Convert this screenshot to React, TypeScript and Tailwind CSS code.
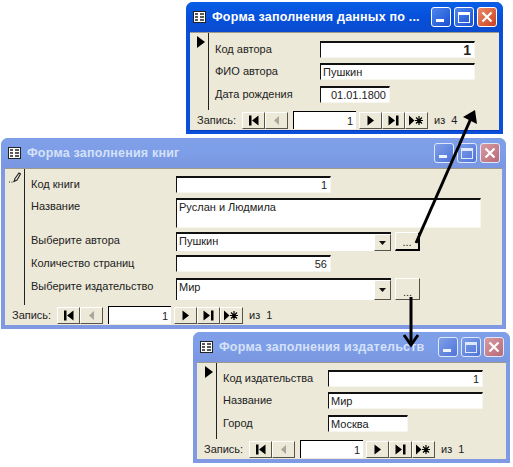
import type { ReactNode } from 'react';

const labelCls = "text-[11px] leading-none text-[#222] whitespace-nowrap";

const FormIcon = () => (
  <svg width="13" height="12" viewBox="0 0 13 12" className="shrink-0">
    <rect x="0.5" y="0.5" width="12" height="11" fill="#fff" stroke="#222" />
    <path d="M2 3h3M2 6h3M2 9h3M7 3h4M7 6h4M7 9h4" stroke="#222" strokeWidth="1.4" />
  </svg>
);

const CaptionButtons = ({ active }: { active: boolean }) => {
  const line = active ? 'border-white' : 'border-[#dfe8fb]';
  const blue = active
    ? 'bg-gradient-to-br from-[#4f86ee] to-[#1a4fd0]'
    : 'bg-gradient-to-br from-[#7f9fe8] to-[#4f74d8]';
  const red = active
    ? 'bg-gradient-to-br from-[#ec8a68] to-[#c8401c]'
    : 'bg-gradient-to-br from-[#d89aa0] to-[#b86a78]';
  const mark = active ? 'bg-white' : 'bg-[#eef3fd]';
  return (
    <div className="flex gap-[3px]">
      <div className={`w-[20px] h-[20px] rounded-[3px] border ${line} ${blue} flex items-end pl-[4px] pb-[4px]`}>
        <div className={`w-[8px] h-[3px] ${mark}`} />
      </div>
      <div className={`w-[20px] h-[20px] rounded-[3px] border ${line} ${blue} flex items-center justify-center`}>
        <div className={`w-[12px] h-[11px] border ${line} border-t-[3px]`} />
      </div>
      <div className={`w-[20px] h-[20px] rounded-[3px] border ${line} ${red} flex items-center justify-center`}>
        <svg width="12" height="12" viewBox="0 0 12 12">
          <path d="M1.500 1.500l9 9M10.500 1.500l-9 9" stroke="#fff" strokeWidth="2.2" />
        </svg>
      </div>
    </div>
  );
};

const NavButton = ({ children }: { children: ReactNode }) => (
  <div className="w-[23px] h-[17px] bg-[#ece9d8] border-t border-l border-t-white border-l-white border-r border-b border-r-[#55534a] border-b-[#55534a] flex items-center justify-center">
    <svg width="15" height="11" viewBox="0 0 15 11">{children}</svg>
  </div>
);

const NavBar = ({ total }: { total: number }) => (
  <div className="h-[20px] flex items-center shrink-0 pl-[7px]">
    <span className={`${labelCls} w-[45px]`}>Запись:</span>
    <NavButton>
      <path d="M3 0.500h2.500v10H3zM12.500 0.500v10L6 5.500z" fill="#000" />
    </NavButton>
    <NavButton>
      <path d="M10 1v9L5 5.500z" fill="#aaa79a" />
    </NavButton>
    <div className="ml-[5px] mr-[3px] w-[63px] h-[18px] bg-white border-t border-l border-black flex items-end justify-end pr-[3px] text-[11px] leading-[15px] text-[#222]">
      1
    </div>
    <NavButton>
      <path d="M4.500 0.500v10l6.500-5z" fill="#000" />
    </NavButton>
    <NavButton>
      <path d="M2.500 0.500v10l6.500-5zM10 0.500h2.500v10H10z" fill="#000" />
    </NavButton>
    <NavButton>
      <path d="M0 0.500v10l5.500-5z" fill="#000" />
      <path d="M10 1v9M6 5.500h8M7 2.500l6 6M13 2.500l-6 6" stroke="#000" strokeWidth="1.200" />
    </NavButton>
    <span className={`${labelCls} ml-[6px]`}>из&nbsp;&nbsp;{total}</span>
  </div>
);

const Field = ({ value, align, className }: { value: string; align?: 'right'; className: string }) => (
  <div
    className={`bg-white border-t-2 border-l border-t-[#111] border-l-[#111] border-r border-b border-r-[#f6f5ee] border-b-[#f6f5ee] pl-[2px] pr-[3px] text-[11px] leading-[14px] text-[#222] whitespace-nowrap ${
      align === 'right' ? 'text-right' : ''
    } ${className}`}
  >
    {value}
  </div>
);

const Combo = ({ value, heavy }: { value: string; heavy?: boolean }) => (
  <>
    <div className="w-[215px] h-full bg-white border-t-2 border-l border-[#111] flex items-stretch justify-between text-[11px] leading-[14px] text-[#222] pl-[2px]">
      <span>{value}</span>
      <div className="w-[17px] bg-[#ece9d8] border-t border-l border-t-white border-l-white border-r border-b border-r-[#55534a] border-b-[#55534a] flex items-center justify-center">
        <svg width="7" height="4" viewBox="0 0 7 4">
          <path d="M0 0h7L3.500 4z" fill="#111" />
        </svg>
      </div>
    </div>
    <div
      className={`ml-[4px] w-[25px] h-full border-t border-l border-t-white border-l-white flex items-end justify-center text-[11px] leading-[14px] text-[#222] ${
        heavy ? 'border-r-2 border-b-2 border-r-black border-b-black' : 'border-r border-b border-r-[#55534a] border-b-[#55534a]'
      }`}
    >
      ...
    </div>
  </>
);

const Row = ({ label, labelWidth, className, children }: { label: string; labelWidth: string; className: string; children: ReactNode }) => (
  <div className={`flex items-start ${className}`}>
    <span className={`${labelCls} ${labelWidth} pt-[3px]`}>{label}</span>
    {children}
  </div>
);

type WindowProps = {
  title: string;
  active?: boolean;
  total: number;
  className: string;
  selector: ReactNode;
  selectorWidth: string;
  formPadding: string;
  children: ReactNode;
};

const AccessWindow = ({ title, active, total, className, selector, selectorWidth, formPadding, children }: WindowProps) => (
  <div
    className={`absolute flex flex-col rounded-t-[7px] overflow-hidden ${
      active ? 'bg-[#0a4fd8]' : 'bg-[#7f9ae2]'
    } ${className}`}
  >
    <div
      className={`h-[30px] shrink-0 flex items-center justify-between pl-[7px] pr-[6px] ${
        active
          ? 'bg-gradient-to-b from-[#0a5fe6] via-[#0650dc] to-[#0a4ccf]'
          : 'bg-gradient-to-b from-[#7f9fe8] via-[#7d9ee8] to-[#7a96e0]'
      }`}
    >
      <div className="flex items-center gap-[6px]">
        <FormIcon />
        <span className={`text-[12.5px] font-bold tracking-[0.2px] whitespace-nowrap ${active ? 'text-white' : 'text-[#d5e1f8]'}`}>
          {title}
        </span>
      </div>
      <CaptionButtons active={!!active} />
    </div>
    <div className={`flex-1 mx-[4px] mb-[4px] bg-[#ece9d8] border-t border-t-[#9c9a8c] flex flex-col min-h-0 ${active ? 'shadow-[0_1px_0_#0038c8]' : ''}`}>
      <div className="flex-1 flex min-h-0">
        <div className={`${selectorWidth} border-r border-r-[#222] shrink-0 flex justify-end pr-[3px] pt-[3px]`}>{selector}</div>
        <div className={`flex-1 flex flex-col ${formPadding}`}>{children}</div>
      </div>
      <NavBar total={total} />
    </div>
  </div>
);

const RecordArrow = () => (
  <svg width="8" height="12" viewBox="0 0 8 12">
    <path d="M0 0v12l8-6z" fill="#000" />
  </svg>
);

const Pencil = () => (
  <svg width="13" height="11" viewBox="0 0 13 11" className="-mr-[1px]">
    <path d="M5 9.500l1-3L10 1l1.500 1L8 8z" fill="none" stroke="#222" strokeWidth="1.100" />
    <path d="M0 10h1M2.500 10h1" stroke="#222" strokeWidth="1" />
  </svg>
);

const App = () => (
  <div className="relative w-[513px] h-[467px] bg-white overflow-hidden font-['Liberation_Sans',sans-serif]">
    <AccessWindow
      active
      title="Форма заполнения данных по ..."
      total={4}
      className="left-[186px] top-[2px] w-[317px] h-[132px]"
      selector={<RecordArrow />}
      selectorWidth="w-[19px]"
      formPadding="pl-[6px] pt-[8px]"
    >
      <Row label="Код автора" labelWidth="w-[105px]" className="h-[17px]">
        <Field value="1" align="right" className="w-[155px] h-[17px] font-bold text-[14px]" />
      </Row>
      <Row label="ФИО автора" labelWidth="w-[105px]" className="h-[17px] mt-[5px]">
        <Field value="Пушкин" className="w-[155px] h-[17px]" />
      </Row>
      <Row label="Дата рождения" labelWidth="w-[105px]" className="h-[17px] mt-[6px]">
        <Field value="01.01.1800" align="right" className="w-[70px] h-[17px]" />
      </Row>
    </AccessWindow>

    <AccessWindow
      title="Форма заполнения книг"
      total={1}
      className="left-[1px] top-[138px] w-[505px] h-[191px]"
      selector={<Pencil />}
      selectorWidth="w-[20px]"
      formPadding="pl-[6px] pt-[7px]"
    >
      <Row label="Код книги" labelWidth="w-[145px]" className="h-[17px]">
        <Field value="1" align="right" className="w-[155px] h-[17px]" />
      </Row>
      <Row label="Название" labelWidth="w-[145px]" className="h-[30px] mt-[5px]">
        <Field value="Руслан и Людмила" className="w-[305px] h-[30px]" />
      </Row>
      <Row label="Выберите автора" labelWidth="w-[145px]" className="h-[19px] mt-[4px]">
        <Combo value="Пушкин" heavy />
      </Row>
      <Row label="Количество страниц" labelWidth="w-[145px]" className="h-[17px] mt-[4px]">
        <Field value="56" align="right" className="w-[155px] h-[17px]" />
      </Row>
      <Row label="Выберите издательство" labelWidth="w-[145px]" className="h-[22px] mt-[6px]">
        <Combo value="Мир" />
      </Row>
    </AccessWindow>

    <AccessWindow
      title="Форма заполнения издательств"
      total={1}
      className="left-[193px] top-[332px] w-[317px] h-[131px]"
      selector={<RecordArrow />}
      selectorWidth="w-[20px]"
      formPadding="pl-[6px] pt-[7px]"
    >
      <Row label="Код издательства" labelWidth="w-[105px]" className="h-[17px]">
        <Field value="1" align="right" className="w-[155px] h-[17px]" />
      </Row>
      <Row label="Название" labelWidth="w-[105px]" className="h-[17px] mt-[5px]">
        <Field value="Мир" className="w-[155px] h-[17px]" />
      </Row>
      <Row label="Город" labelWidth="w-[105px]" className="h-[17px] mt-[6px]">
        <Field value="Москва" className="w-[80px] h-[17px]" />
      </Row>
    </AccessWindow>

    {/* connector arrows between the forms */}
    <svg className="absolute inset-0 pointer-events-none" width="513" height="467" viewBox="0 0 513 467">
      <path d="M416 243L472 116" stroke="#000" strokeWidth="3" fill="none" />
      <path d="M475 110L463 117L477 124z" fill="#000" />
      <path d="M411 297V342" stroke="#000" strokeWidth="3" fill="none" />
      <path d="M404 335L411 345L418 335" stroke="#000" strokeWidth="3" fill="none" />
    </svg>
  </div>
);

export default App;
